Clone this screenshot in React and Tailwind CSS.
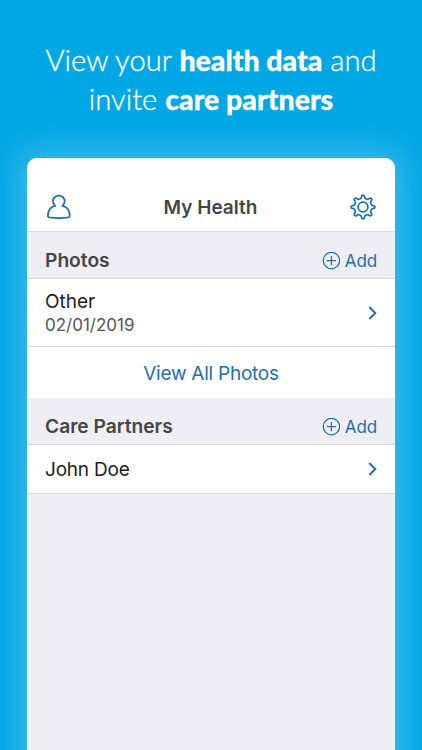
import React from 'react';

// Outline of an eight-toothed gear, centred on 0,0
const buildGearPath = () => {
  const points = [];
  for (let i = 0; i < 8; i++) {
    [
      [-15, 8.7],
      [-9.5, 9.4],
      [-6.5, 12],
      [6.5, 12],
      [9.5, 9.4],
      [15, 8.7],
    ].forEach(([offset, radius]) => {
      const angle = ((i * 45 + offset) * Math.PI) / 180;
      points.push([radius * Math.cos(angle), radius * Math.sin(angle)]);
    });
  }
  const mid = (a, b) => `${((a[0] + b[0]) / 2).toFixed(2)} ${((a[1] + b[1]) / 2).toFixed(2)}`;
  const start = mid(points[points.length - 1], points[0]);
  const curves = points.map((p, i) => {
    const next = points[(i + 1) % points.length];
    return `Q${p[0].toFixed(2)} ${p[1].toFixed(2)} ${mid(p, next)}`;
  });
  return `M${start}${curves.join('')}Z`;
};

const gearPath = buildGearPath();

const PersonIcon = () => (
  <svg className="w-6 h-[26px]" viewBox="0 0 24 26" fill="none" stroke="#1b6fb0" strokeWidth="1.7" strokeLinejoin="round">
    <path d="M8.2 11.8C6.8 10.5 5.9 9 5.9 7.2C5.9 4 8.6 1.7 11.8 1.7S17.7 4 17.7 7.2C17.7 9 16.8 10.5 15.4 11.8C20 12.6 22.7 16.7 22.7 22C22.7 22.9 22.2 23.2 21.4 23.4C15.3 24.4 8.3 24.4 2.2 23.4C1.4 23.2.9 22.9.9 22C.9 16.7 3.6 12.6 8.2 11.8Z" />
  </svg>
);

const GearIcon = () => (
  <svg className="w-[26px] h-[26px]" viewBox="-13 -13 26 26" fill="none" stroke="#1b6fb0" strokeWidth="1.7">
    <path d={gearPath} />
    <circle r="4.9" />
  </svg>
);

const ChevronIcon = () => (
  <svg className="w-[10px] h-4" viewBox="0 0 10 16" fill="none" stroke="#1b6fb0" strokeWidth="1.9">
    <path d="M2.3 2L8.3 8L2.3 14" />
  </svg>
);

const SectionHeader = ({ title }) => (
  <div className="flex h-[47px] items-end justify-between border-b border-[#d9d9dd] bg-[#efeef4] px-[18px] pb-[5px]">
    <h2 className="pb-px text-[19.2px] leading-6 font-semibold text-[#454548]">{title}</h2>
    <button className="flex items-center gap-[5px] text-[17px] leading-6 text-[#1b6fb0]">
      <svg className="w-[18px] h-[18px]" viewBox="0 0 18 18" fill="none" stroke="currentColor" strokeWidth="1.2">
        <circle cx="9.4" cy="8.6" r="8.2" />
        <path d="M9.4 4V13.2M4.8 8.6H14" />
      </svg>
      <span className="pt-px tracking-[-0.1px]">Add</span>
    </button>
  </div>
);

const App = () => {
  return (
    <div className="flex h-[750px] w-[422px] flex-col items-center overflow-hidden bg-[#02a7e5] font-['Inter',sans-serif]">
      <h1 className="h-[158px] shrink-0 pt-10 text-center font-['Lato',sans-serif] text-[29.2px] leading-[39px] font-light whitespace-nowrap text-white [-webkit-text-stroke:0.3px_white]">
        View your <span className="text-[28.5px] leading-none font-black">health data</span> and
        <br />
        invite <span className="text-[28.5px] leading-none font-black">care partners</span>
      </h1>

      <main className="h-[620px] w-[368px] shrink-0 overflow-hidden rounded-t-[10px] bg-[#efeef4] shadow-[0_0_30px_8px_rgba(100,202,240,0.6)]">
        <header className="flex h-[74px] items-end justify-between border-b border-[#d9d9dd] bg-white pr-[19px] pl-5 pb-[11px]">
          <PersonIcon />
          <span className="text-[19px] leading-6 font-semibold text-[#454548]">My Health</span>
          <GearIcon />
        </header>

        <SectionHeader title="Photos" />
        <div className="flex h-[68px] items-center justify-between border-b border-[#d9d9dd] bg-white px-[18px]">
          <div className="pt-px">
            <p className="text-[19px] leading-6 text-[#1c1c28]">Other</p>
            <p className="text-[17px] leading-[23px] text-[#555558]">02/01/2019</p>
          </div>
          <ChevronIcon />
        </div>
        <button className="block h-[51px] w-full bg-white pt-[3px] text-[19px] tracking-[-0.25px] text-[#1b6fb0]">View All Photos</button>

        <SectionHeader title="Care Partners" />
        <div className="flex h-[49px] items-center justify-between border-b border-[#d9d9dd] bg-white px-[18px]">
          <p className="pt-[2px] text-[19px] leading-6 tracking-[-0.2px] text-[#1c1c28]">John Doe</p>
          <ChevronIcon />
        </div>
      </main>
    </div>
  );
};

export default App;
